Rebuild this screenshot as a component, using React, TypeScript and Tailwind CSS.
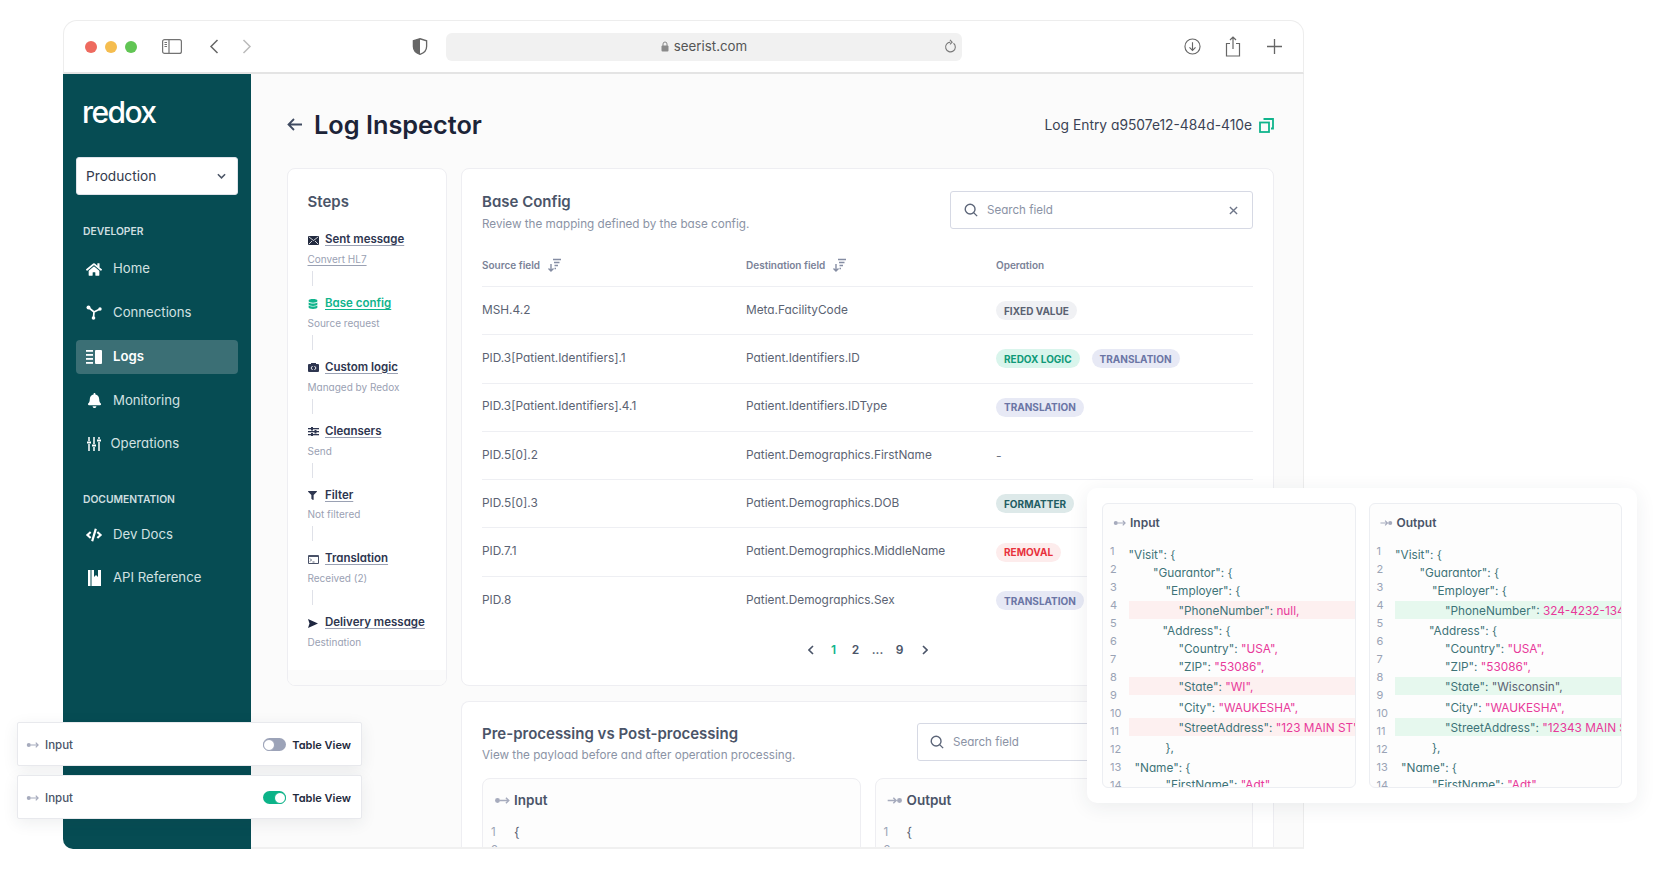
import React from "react";
import { FaHome, FaBell, FaCode, FaFilter, FaDatabase } from "react-icons/fa";

const font = "font-['Inter','Noto_Sans',sans-serif] [font-feature-settings:'cv11']";

const Arrow = ({ out = false, className = "" }: { out?: boolean; className?: string }) => (
  <svg viewBox="0 0 14 8" className={className} fill="none" stroke="#a6abbd" strokeWidth="1.3">
    {out ? (
      <>
        <path d="M0.5 4H8M5.5 1.5 8 4 5.5 6.5" />
        <circle cx="11" cy="4" r="2.2" fill="#a6abbd" stroke="none" />
      </>
    ) : (
      <>
        <circle cx="3" cy="4" r="2.2" fill="#a6abbd" stroke="none" />
        <path d="M5 4H13M10.5 1.5 13 4 10.5 6.5" />
      </>
    )}
  </svg>
);

const Sort = ({ className = "" }: { className?: string }) => (
  <svg viewBox="0 0 15 14" className={className} fill="none" stroke="#858da3" strokeWidth="1.4">
    <path d="M4 6v7M1.5 10.5 4 13l2.5-2.5M6 1.5h8M7 4.5h5.5M7.500 7.500h3.500M7.500 10.500h1.500" />
  </svg>
);

const SearchIcon = ({ className = "" }: { className?: string }) => (
  <svg viewBox="0 0 16 16" className={className} fill="none" stroke="#5d6679" strokeWidth="1.6">
    <circle cx="7" cy="7" r="5.6" />
    <path d="M11 11l4 4" />
  </svg>
);

/* ---- browser toolbar ---- */
function Toolbar() {
  return (
    <div className="flex h-[54px] items-center rounded-t-[14px] border-x border-t border-b-2 border-x-[#ededed] border-t-[#ededed] border-b-[#e4e4e4] bg-white">
      <div className="ml-[21px] flex gap-[8px]">
        <span className="h-[12px] w-[12px] rounded-full bg-[#ee6a5f]" />
        <span className="h-[12px] w-[12px] rounded-full bg-[#f5bd4f]" />
        <span className="h-[12px] w-[12px] rounded-full bg-[#61c554]" />
      </div>
      <svg viewBox="0 0 20 15" className="ml-[25px] h-[15px] w-[20px]" fill="none" stroke="#737373" strokeWidth="1.2">
        <rect x="0.6" y="0.6" width="18.8" height="13.8" rx="2" />
        <path d="M7 1v13M2.500 3.500h2.500M2.500 5.500h2.500M2.500 7.500h2.500" />
      </svg>
      <svg viewBox="0 0 10 15" className="ml-[27px] h-[15px] w-[10px]" fill="none" stroke="#666" strokeWidth="1.5">
        <path d="M8.500 1 2 7.500 8.500 14" />
      </svg>
      <svg viewBox="0 0 10 15" className="ml-[23px] h-[15px] w-[10px]" fill="none" stroke="#bbb" strokeWidth="1.5">
        <path d="M1.500 1 8 7.500 1.500 14" />
      </svg>
      <svg viewBox="0 0 16 18" className="ml-[160px] h-[17px] w-[16px]">
        <path d="M8 .8 15 3v6c0 4-3 7-7 8.300C4 16 1 13 1 9V3z" fill="none" stroke="#666" strokeWidth="1.4" />
        <path d="M8 .8 1 3v6c0 4 3 7 7 8.300z" fill="#666" />
      </svg>
      <div className="relative ml-[18px] flex h-[28px] w-[516px] items-center justify-center rounded-[6px] bg-[#f1f1f1]">
        <svg viewBox="0 0 8 11" className="mr-[5px] h-[11px] w-[8px]">
          <path d="M2 5V3a2 2 0 0 1 4 0v2" fill="none" stroke="#8a8a8a" strokeWidth="1" />
          <rect x="0.500" y="4.500" width="7" height="6" rx="1" fill="#8a8a8a" />
        </svg>
        <span className="text-[13.300px] leading-none text-[#555]">seerist.com</span>
        <svg viewBox="0 0 12 14" className="absolute right-[5px] top-[6px] h-[16px] w-[13px]" fill="none" stroke="#777" strokeWidth="1">
          <path d="M8.800 3.500a4.500 4.500 0 1 1-3-1M5.500 0.500l2 2-2 2" />
        </svg>
      </div>
      <svg viewBox="0 0 18 18" className="ml-[221.500px] h-[17px] w-[17px]" fill="none" stroke="#666" strokeWidth="1.2">
        <circle cx="9" cy="9" r="8" />
        <path d="M9 4.500v8.500M5.800 10 9 13.200 12.200 10" />
      </svg>
      <svg viewBox="0 0 16 21" className="ml-[24.500px] h-[21px] w-[16px]" fill="none" stroke="#666" strokeWidth="1.2">
        <path d="M5 7.500H1.500v12.500h13V7.500H11M8 13V1M5 4l3-3 3 3" />
      </svg>
      <svg viewBox="0 0 16 16" className="ml-[25.500px] h-[15px] w-[15px]" fill="none" stroke="#666" strokeWidth="1.4">
        <path d="M8 0v16M0 8h16" />
      </svg>
    </div>
  );
}

/* ---- sidebar ---- */
const ConnIcon = () => (
  <svg viewBox="0 0 16 15" className="h-[15px] w-[16px]" fill="none" stroke="white" strokeWidth="1.7">
    <path d="M2.500 2.500 8 7l6-3M8 7l-.5 5.500" />
    <circle cx="2.500" cy="2.500" r="2" fill="white" stroke="none" />
    <circle cx="14" cy="4" r="1.700" fill="white" stroke="none" />
    <circle cx="7.500" cy="13" r="1.800" fill="white" stroke="none" />
  </svg>
);
const LogsIcon = () => (
  <svg viewBox="0 0 16 14" className="h-[14px] w-[16px]" fill="white">
    <rect x="0" y="0" width="7" height="1.800" />
    <rect x="0" y="4" width="7" height="1.800" />
    <rect x="0" y="8" width="7" height="1.800" />
    <rect x="0" y="12" width="7" height="1.800" />
    <rect x="9" y="0" width="7" height="14" rx="1" />
  </svg>
);
const OpsIcon = () => (
  <svg viewBox="0 0 14 14" className="h-[14px] w-[14px]" fill="none" stroke="white" strokeWidth="1.500">
    <path d="M2 0v4M2 7v7M7 0v7M7 10v4M12 0v2M12 5v9" />
    <path d="M0 5.500h4M5 8.500h4M10 3.500h4" strokeWidth="2" />
  </svg>
);
const BookIcon = () => (
  <svg viewBox="0 0 13 16" className="h-[16px] w-[13px]" fill="white">
    <rect x="0" y="0" width="2.500" height="16" />
    <path d="M3.500 0H6v7l2-2 2 2V0h3v16H3.500z" />
  </svg>
);

function NavItem({ icon, label, active = false, gap = "gap-[11px]", pl = "pl-[10px]" }: { icon: React.ReactNode; label: string; active?: boolean; gap?: string; pl?: string }) {
  return (
    <div className={`flex h-[34px] items-center rounded-[4px] ${gap} ${pl} ${active ? "bg-[#3b6f75] font-semibold text-white" : "text-[#d2e1e2]"}`}>
      <span className="flex w-[16px] justify-center text-white">{icon}</span>
      <span className="text-[13.200px] leading-none">{label}</span>
    </div>
  );
}

function Sidebar() {
  return (
    <div className="flex w-[188px] shrink-0 flex-col rounded-bl-[10px] bg-[#064c53] px-[13px]">
      <div className="ml-[6px] mt-[23px] h-[30px] text-[30px] font-medium leading-[30px] tracking-[-1.600px] text-white">redox</div>
      <div className="mt-[30px] flex h-[38px] items-center justify-between rounded-[3px] border border-[#dfe3ea] bg-white pl-[9px] pr-[11px]">
        <span className="text-[13.700px] text-[#333b4d]">Production</span>
        <svg viewBox="0 0 10 6" className="h-[6px] w-[9px]" fill="none" stroke="#4c5566" strokeWidth="1.700">
          <path d="M1 1l4 4 4-4" />
        </svg>
      </div>
      <div className="ml-[7px] mt-[29px] h-[14px] text-[10.300px] font-semibold leading-[14px] text-[#cfdfe0]">DEVELOPER</div>
      <div className="mt-[14px] flex flex-col gap-[9.750px]">
        <NavItem icon={<FaHome size={17} />} label="Home" />
        <NavItem icon={<ConnIcon />} label="Connections" />
        <NavItem icon={<LogsIcon />} label="Logs" active />
        <NavItem icon={<FaBell size={15} />} label="Monitoring" />
        <NavItem icon={<OpsIcon />} label="Operations" gap="gap-[8.500px]" />
      </div>
      <div className="ml-[7px] mt-[31px] h-[14px] text-[10.300px] font-semibold leading-[14px] text-[#cfdfe0]">DOCUMENTATION</div>
      <div className="mt-[12px] flex flex-col gap-[9px]">
        <NavItem icon={<FaCode size={16} />} label="Dev Docs" />
        <NavItem icon={<BookIcon />} label="API Reference" />
      </div>
    </div>
  );
}

/* ---- steps ---- */
const c = "#2e3650";
const stepIcons: Record<string, React.ReactNode> = {
  sent: (
    <svg viewBox="0 0 11 9" className="h-[9px] w-[11px]">
      <rect width="11" height="9" rx="1" fill="#232b40" />
      <path d="M1 1l4.500 3.500L10 1M1 8l3-3M10 8 7 5" stroke="white" strokeWidth=".8" fill="none" />
    </svg>
  ),
  base: <FaDatabase size={10} className="text-[#10b48c]" />,
  logic: (
    <svg viewBox="0 0 11 9" className="h-[9px] w-[11px]">
      <path d="M3 1V0h5v1h2a1 1 0 0 1 1 1v6a1 1 0 0 1-1 1H1a1 1 0 0 1-1-1V2a1 1 0 0 1 1-1z" fill={c} />
      <path d="M4.500 3 3 5l1.500 2M6.500 3 8 5 6.500 7" stroke="white" strokeWidth=".9" fill="none" />
    </svg>
  ),
  clean: (
    <svg viewBox="0 0 11 9" className="h-[9px] w-[11px]" fill={c}>
      <rect y="1" width="11" height="1.300" />
      <rect y="4" width="11" height="1.300" />
      <rect y="7" width="11" height="1.300" />
      <rect x="3" y="0" width="2" height="3.500" />
      <rect x="6.500" y="3" width="2" height="3.500" />
      <rect x="3" y="6" width="2" height="3" />
    </svg>
  ),
  filter: <FaFilter size={9} color={c} />,
  trans: (
    <svg viewBox="0 0 11 9" className="h-[9px] w-[11px]">
      <rect width="11" height="9" rx="1" fill="#4a5268" />
      <rect x="1" y="2" width="9" height="6" fill="white" />
      <path d="M2 3.500 3.500 5 2 6.500M4.500 7h2" stroke="#4a5268" strokeWidth=".9" fill="none" />
    </svg>
  ),
  send: (
    <svg viewBox="0 0 10 9" className="h-[9px] w-[10px]">
      <path d="M0 0l10 4.500L0 9l1.500-4.500z" fill="#1f2740" />
    </svg>
  ),
};

function Step({ k, title, sub, last = false, active = false, subLink = false }: { k: string; title: string; sub: string; last?: boolean; active?: boolean; subLink?: boolean }) {
  return (
    <div className={last ? "" : "h-[63.850px]"}>
      <div className="flex h-[18px] items-center">
        <span className="flex w-[17.500px] justify-start">{stepIcons[k]}</span>
        <span className={`text-[11.500px] font-semibold leading-none underline underline-offset-2 ${active ? "text-[#10b48c] decoration-[#10b48c]" : "text-[#2e3650] decoration-[#9aa1b3]"}`}>{title}</span>
      </div>
      <div className={`mt-[2px] h-[16px] text-[10px] leading-[16px] text-[#9aa1b3] ${subLink ? "underline underline-offset-2" : ""}`}>{sub}</div>
      {!last && <div className="ml-[4px] mt-[4px] h-[15px] w-px bg-[#dfe1e8]" />}
    </div>
  );
}

function Steps() {
  return (
    <div className="flex h-[518px] w-[160px] shrink-0 flex-col overflow-hidden rounded-[8px] border border-[#eeeef2] bg-white">
      <div className="pl-[19.500px] pt-[24px]">
        <div className="mb-[20px] h-[18px] text-[15px] font-semibold leading-[18px] text-[#4a5468]">Steps</div>
        <Step k="sent" title="Sent message" sub="Convert HL7" subLink />
        <Step k="base" title="Base config" sub="Source request" active />
        <Step k="logic" title="Custom logic" sub="Managed by Redox" />
        <Step k="clean" title="Cleansers" sub="Send" />
        <Step k="filter" title="Filter" sub="Not filtered" />
        <Step k="trans" title="Translation" sub="Received (2)" />
        <Step k="send" title="Delivery message" sub="Destination" last />
      </div>
      <div className="mt-auto h-[15px] bg-[#fbfbfb]" />
    </div>
  );
}

/* ---- table ---- */
const badgeStyles: Record<string, string> = {
  FIXED: "bg-[#f0f1f4] text-[#5a6272]",
  REDOX: "bg-[#d9f5ec] text-[#0f9a78]",
  TRANS: "bg-[#e7e9f5] text-[#6b75a5]",
  FORM: "bg-[#dde9e9] text-[#1f5d63]",
  REM: "bg-[#fdecec] text-[#e8323c]",
};
const Badge = ({ kind, children }: { kind: string; children: React.ReactNode }) => (
  <span className={`inline-flex h-[19px] items-center rounded-full px-[8px] text-[10px] font-bold leading-none ${badgeStyles[kind]}`}>{children}</span>
);

const rows: [string, string, React.ReactNode][] = [
  ["MSH.4.2", "Meta.FacilityCode", <Badge kind="FIXED">FIXED VALUE</Badge>],
  ["PID.3[Patient.Identifiers].1", "Patient.Identifiers.ID", <><Badge kind="REDOX">REDOX LOGIC</Badge><Badge kind="TRANS">TRANSLATION</Badge></>],
  ["PID.3[Patient.Identifiers].4.1", "Patient.Identifiers.IDType", <Badge kind="TRANS">TRANSLATION</Badge>],
  ["PID.5[0].2", "Patient.Demographics.FirstName", <span className="text-[12px] text-[#6a7282]">-</span>],
  ["PID.5[0].3", "Patient.Demographics.DOB", <Badge kind="FORM">FORMATTER</Badge>],
  ["PID.7.1", "Patient.Demographics.MiddleName", <Badge kind="REM">REMOVAL</Badge>],
  ["PID.8", "Patient.Demographics.Sex", <Badge kind="TRANS">TRANSLATION</Badge>],
];

function BaseConfig() {
  return (
    <div className="h-[518px] shrink-0 rounded-[8px] border border-[#eeeef2] bg-white px-[20px] pt-[22px]">
      <div className="flex justify-between">
        <div className="pt-[1px]">
          <div className="h-[20px] text-[15px] font-semibold leading-[20px] text-[#4a5468]">Base Config</div>
          <div className="mt-[4px] h-[16px] text-[11.700px] leading-[16px] text-[#8b93a5]">Review the mapping defined by the base config.</div>
        </div>
        <div className="flex h-[38px] w-[303px] items-center rounded-[3px] border border-[#d6d9e4] bg-white pl-[13px] pr-[14px]">
          <SearchIcon className="h-[14px] w-[14px]" />
          <span className="ml-[9px] mt-[2px] text-[11.600px] text-[#8b93a5]">Search field</span>
          <svg viewBox="0 0 10 10" className="ml-auto h-[9px] w-[9px]" fill="none" stroke="#6d7588" strokeWidth="1.500">
            <path d="M1 1l8 8M9 1 1 9" />
          </svg>
        </div>
      </div>
      <div className="mt-[12px] grid h-[43px] grid-cols-[264px_250px_1fr] items-center border-b border-[#eeeff3] text-[10px] font-semibold text-[#7a8297]">
        <div className="flex items-center gap-[7px]">Source field<Sort className="h-[14px] w-[15px]" /></div>
        <div className="flex items-center gap-[7px]">Destination field<Sort className="h-[14px] w-[15px]" /></div>
        <div>Operation</div>
      </div>
      {rows.map((r, i) => (
        <div key={i} className={`grid h-[48.300px] grid-cols-[264px_250px_1fr] items-center text-[11.850px] text-[#5b6373] ${i < rows.length - 1 ? "border-b border-[#eeeff3]" : ""}`}>
          <div>{r[0]}</div>
          <div>{r[1]}</div>
          <div className="flex items-center gap-[12px]">{r[2]}</div>
        </div>
      ))}
      <div className="mt-[15px] flex h-[20px] items-center justify-center text-[12px] font-semibold text-[#4a5468]">
        <svg viewBox="0 0 6 10" className="mr-[9px] h-[10px] w-[6px]" fill="none" stroke="#4a5468" strokeWidth="1.600"><path d="M5 1 1 5l4 4" /></svg>
        <span className="w-[22px] text-center text-[#10b48c]">1</span>
        <span className="w-[22px] text-center">2</span>
        <span className="w-[22px] text-center">...</span>
        <span className="w-[22px] text-center">9</span>
        <svg viewBox="0 0 6 10" className="ml-[11px] h-[10px] w-[6px]" fill="none" stroke="#4a5468" strokeWidth="1.600"><path d="m1 1 4 4-4 4" /></svg>
      </div>
    </div>
  );
}

function PrePost() {
  return (
    <div className="mt-[15px] min-h-0 flex-1 overflow-hidden rounded-t-[8px] border-x border-t border-[#eeeef2] bg-white px-[20px] pt-[21px]">
      <div className="flex justify-between">
        <div className="pt-[1px]">
          <div className="h-[20px] text-[15px] font-semibold leading-[20px] text-[#4a5468]">Pre-processing vs Post-processing</div>
          <div className="mt-[3px] h-[16px] text-[11.700px] leading-[16px] text-[#8b93a5]">View the payload before and after operation processing.</div>
        </div>
        <div className="flex h-[38px] w-[336px] items-center rounded-[3px] border border-[#d6d9e4] bg-white pl-[12px]">
          <SearchIcon className="h-[14px] w-[14px]" />
          <span className="ml-[9px] mt-[2px] text-[11.600px] text-[#8b93a5]">Search field</span>
        </div>
      </div>
      <div className="mt-[15px] flex gap-[14px]">
        {[false, true].map((o) => (
          <div key={String(o)} className="h-[120px] flex-1 rounded-[8px] border border-[#eeeef2] bg-[#fdfdfd]">
            <div className="flex h-[42px] items-center pl-[11px]">
              <Arrow out={o} className="h-[9px] w-[16px]" />
              <span className="ml-[4px] text-[13.500px] font-semibold text-[#4a5468]">{o ? "Output" : "Input"}</span>
            </div>
            <div className="mt-[3px] flex h-[18px] items-center pl-[8px] text-[11.500px] text-[#9aa3b5]">
              <span className="w-[23px]">1</span>
              <span className="text-[13px] text-[#5b6373]">{"{"}</span>
            </div>
            <div className="flex h-[18px] items-center pl-[8px] text-[11.500px] text-[#9aa3b5]">2</div>
          </div>
        ))}
      </div>
    </div>
  );
}

/* ---- overlay code panel ---- */
type Line = { cls: string; k?: string; v?: string; plain?: string; gray?: boolean; hl?: boolean };
const lines = (out: boolean): Line[] => [
  { cls: "pl-0", plain: '"Visit": {' },
  { cls: "pl-[24.500px]", plain: '"Guarantor": {' },
  { cls: "pl-[37px]", plain: '"Employer": {' },
  { cls: "pl-[50px] mt-[1px]", k: '"PhoneNumber": ', v: out ? "324-4232-1345" : "null,", hl: true },
  { cls: "pl-[34px] mt-[3.300px]", plain: '"Address": {' },
  { cls: "pl-[50px]", k: '"Country": ', v: '"USA",' },
  { cls: "pl-[50px]", k: '"ZIP": ', v: '"53086",' },
  { cls: "pl-[50px] mt-[1px]", k: '"State": ', v: out ? '"Wisconsin",' : '"WI",', gray: out, hl: true },
  { cls: "pl-[50px] mt-[3.700px]", k: '"City": ', v: '"WAUKESHA",' },
  { cls: "pl-[50px] mt-[1.300px]", k: '"StreetAddress": ', v: out ? '"12343 MAIN ST",' : '"123 MAIN ST",', hl: true },
  { cls: "pl-[37px] mt-[3px]", plain: "}," },
  { cls: "pl-[6px] mt-[2px]", plain: '"Name": {' },
  { cls: "pl-[37px] -mt-[1px]", k: '"FirstName": ', v: '"Adt"' },
];

function CodeCard({ out }: { out: boolean }) {
  return (
    <div className="h-[285px] min-w-0 flex-1 overflow-hidden rounded-[6px] border border-[#eceef2] bg-[#fdfdfd]">
      <div className="flex h-[38px] items-center pl-[10px]">
        <Arrow out={out} className="h-[8px] w-[13px]" />
        <span className="ml-[4px] text-[12px] font-semibold text-[#4a5468]">{out ? "Output" : "Input"}</span>
      </div>
      <div className="flex">
        <div className="w-[25.500px] shrink-0 pl-[7px] text-[11px] leading-[18px] text-[#9aa3b5]">
          {Array.from({ length: 14 }, (_, i) => (
            <div key={i} className="h-[18px]">{i + 1}</div>
          ))}
        </div>
        <div className="mt-[3.700px] min-w-0 flex-1 overflow-hidden text-[11.800px] text-[#3d7378]">
          {lines(out).map((l, i) => (
            <div key={i} className={`h-[18px] whitespace-nowrap ${l.cls} ${l.hl ? `leading-[20px] ${out ? "bg-[#e6f8ee]" : "bg-[#fdf0f0]"}` : "leading-[18px]"}`}>
              {l.plain ?? (
                <>
                  {l.k}
                  <span className={l.gray ? "text-[#5a6272]" : "text-[#e8399a]"}>{l.v}</span>
                </>
              )}
            </div>
          ))}
        </div>
      </div>
    </div>
  );
}

function ToggleRow({ on, className }: { on: boolean; className: string }) {
  return (
    <div className={`absolute left-[17px] flex h-[44px] w-[345px] items-center rounded-[2px] border border-[#e8e9ed] bg-white pl-[8px] pr-[10px] pt-[1px] shadow-[0_4px_16px_rgba(40,50,70,0.08)] ${className}`}>
      <Arrow className="h-[8px] w-[13px]" />
      <span className="ml-[6px] mt-[1px] text-[11.500px] font-medium leading-[16px] text-[#4a5468]">Input</span>
      <span className={`ml-auto flex h-[13px] w-[23px] items-center rounded-full ${on ? "justify-end bg-[#0cb388]" : "justify-start bg-[#9ca3b8]"}`}>
        <span className={`h-[12px] w-[12px] rounded-full border bg-white ${on ? "border-[#0cb388]" : "border-[#9ca3b8]"}`} />
      </span>
      <span className="ml-[6px] text-[11px] font-semibold leading-[16px] text-[#1f2a3d]">Table View</span>
    </div>
  );
}

export default function App() {
  return (
    <div className={`relative h-[870px] w-full overflow-hidden bg-white pl-[63px] pt-[20px] ${font}`}>
      <div className="flex h-[829px] w-[1241px] flex-col">
        <Toolbar />
        <div className="flex min-h-0 flex-1">
          <Sidebar />
          <div className="flex min-w-0 flex-1 flex-col border-b-2 border-r border-b-[#f0f0f0] border-r-[#ededed] bg-[#fbfbfb] pl-[36px] pr-[29px]">
            <div className="mt-[31px] flex h-[40px] items-center justify-between">
              <div className="flex items-center">
                <svg viewBox="0 0 15 13" className="h-[13px] w-[15px]" fill="none" stroke="#3f4a60" strokeWidth="1.800">
                  <path d="M15 6.500H1.500M7 1 1.500 6.500 7 12" />
                </svg>
                <span className="ml-[12px] text-[25.300px] font-semibold leading-none text-[#1c2438]">Log Inspector</span>
              </div>
              <div className="flex items-center">
                <span className="text-[13.800px] text-[#3a4254]">Log Entry a9507e12-484d-410e</span>
                <svg viewBox="0 0 15 15" className="ml-[7px] h-[15px] w-[15px]" fill="none" stroke="#10b48c" strokeWidth="1.800">
                  <rect x="1" y="4.500" width="9" height="9.500" />
                  <path d="M4.500 1H14v9.500h-2" />
                </svg>
              </div>
            </div>
            <div className="mt-[23px] flex min-h-0 flex-1 gap-[14px]">
              <Steps />
              <div className="flex min-w-0 flex-1 flex-col">
                <BaseConfig />
                <PrePost />
              </div>
            </div>
          </div>
        </div>
      </div>

      <ToggleRow on={false} className="top-[722px]" />
      <ToggleRow on className="top-[775px]" />

      <div className="absolute left-[1087px] top-[488px] flex h-[315px] w-[550px] gap-[13px] rounded-[10px] bg-white p-[15px] shadow-[0_4px_20px_rgba(40,50,70,0.08)]">
        <CodeCard out={false} />
        <CodeCard out />
      </div>
    </div>
  );
}
